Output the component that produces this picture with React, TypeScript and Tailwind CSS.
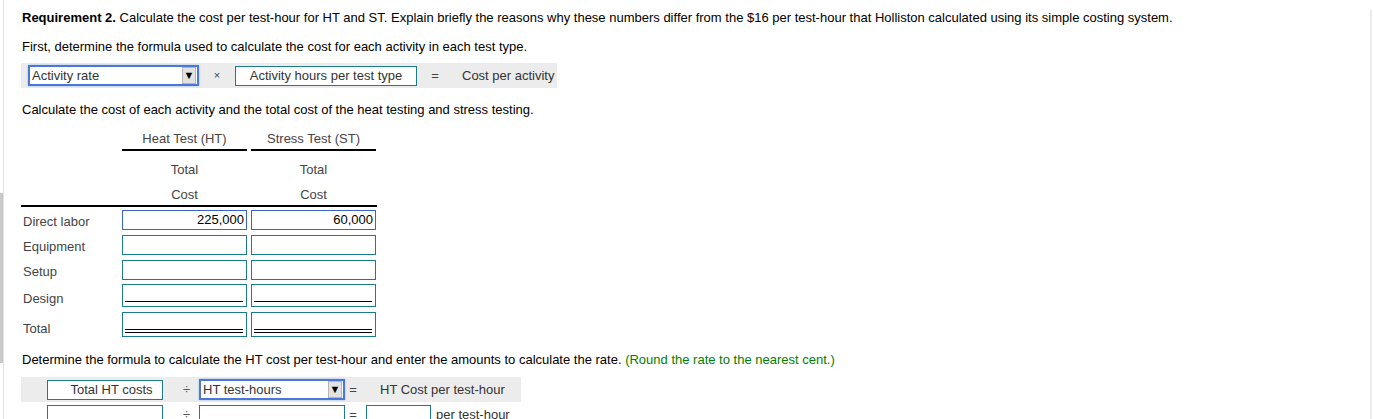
import React from 'react';

const Select: React.FC<{ label: string; width: string }> = ({ label, width }) => (
  <div
    className={`${width} h-[21px] flex items-center border-2 border-[#4a78d6] bg-white shadow-[0_0_2px_#9bb8ec]`}
  >
    <span className="flex-1 pl-[2px] text-[#333] leading-[16px] truncate">{label}</span>
    <span className="w-[14px] h-[17px] mr-px flex items-center justify-center bg-[#e2e2e2] border border-[#b5b5b5] text-[11px] leading-none text-black">
      ▼
    </span>
  </div>
);

const Box: React.FC<{ children?: React.ReactNode; className?: string }> = ({ children, className = '' }) => (
  <div className={`border border-[#1b7c8c] bg-white ${className}`}>{children}</div>
);

const rows = [
  { label: 'Direct labor', ht: '225,000', st: '60,000', h: 'h-[20px]', mt: 'mt-[3px]', line: 'none' },
  { label: 'Equipment', ht: '', st: '', h: 'h-[20px]', mt: 'mt-[5px]', line: 'none' },
  { label: 'Setup', ht: '', st: '', h: 'h-[20px]', mt: 'mt-[5px]', line: 'none' },
  { label: 'Design', ht: '', st: '', h: 'h-[23px]', mt: 'mt-[4px]', line: 'single' },
  { label: 'Total', ht: '', st: '', h: 'h-[25px]', mt: 'mt-[5px]', line: 'double' },
];

const Cell: React.FC<{ value: string; h: string; line: string; first: boolean }> = ({ value, h, line, first }) => {
  const border = first ? 'border-[#3a63d0]' : 'border-[#1b7c8c]';
  return (
    <div className={`w-[125px] ${h} border ${border} bg-white flex flex-col justify-end`}>
      {value && (
        <span className="flex-1 text-right pr-[2px] text-black leading-[18px]">{value}</span>
      )}
      {line === 'single' && <div className="mx-[2px] mr-[3px] mb-[4px] h-px bg-black" />}
      {line === 'double' && <div className="mx-[2px] mr-[3px] mb-[3px] h-[4px] border-y border-black" />}
    </div>
  );
};

export default function App() {
  return (
    <div className="flex w-[1373px] h-[419px] overflow-hidden bg-white text-[13px] font-['Liberation_Sans',Arial,sans-serif]">
      {/* left scroll track */}
      <div className="w-[3px] shrink-0">
        <div className="mt-[193px] h-[170px] bg-[#c9c9c9]" />
      </div>
      <div className="w-px shrink-0 bg-[#e2e2e2]" />

      <div className="flex-1 pl-[17px] pt-[10px]">
        <p className="pl-px leading-[16px] text-black">
          <span className="font-bold">Requirement 2.</span> Calculate the cost per test-hour for HT and ST. Explain
          briefly the reasons why these numbers differ from the $16 per test-hour that Holliston calculated using its
          simple costing system.
        </p>
        <p className="mt-[13px] pl-px leading-[16px] text-black">
          First, determine the formula used to calculate the cost for each activity in each test type.
        </p>

        <div className="mt-[8px] w-[536px] h-[25px] bg-[#ececec] flex items-center">
          <div className="ml-[7px]">
            <Select label="Activity rate" width="w-[171px]" />
          </div>
          <span className="w-[36px] text-center text-[#444] text-[11px]">×</span>
          <Box className="w-[182px] h-[20px] flex items-center justify-center">
            <span className="text-[#333] leading-[16px]">Activity hours per test type</span>
          </Box>
          <span className="w-[36px] text-center text-[#444]">=</span>
          <span className="ml-[9px] text-[#333]">Cost per activity</span>
        </div>

        <p className="mt-[14px] pl-px leading-[16px] text-black">
          Calculate the cost of each activity and the total cost of the heat testing and stress testing.
        </p>

        {/* table */}
        <div className="mt-[13px] flex text-[#444]">
          <div className="w-[101px]" />
          <div className="w-[125px] h-[20px] border-b-2 border-black text-center leading-[16px]">Heat Test (HT)</div>
          <div className="w-[125px] h-[20px] ml-[4px] border-b-2 border-black text-center leading-[16px]">
            Stress Test (ST)
          </div>
        </div>
        <div className="mt-[11px] flex text-[#444] leading-[16px]">
          <div className="w-[101px]" />
          <div className="w-[125px] text-center">Total</div>
          <div className="w-[125px] ml-[4px] text-center">Total</div>
        </div>
        <div className="mt-[9px] w-[356px] h-[20px] border-b-2 border-black flex text-[#444] leading-[16px]">
          <div className="w-[101px]" />
          <div className="w-[125px] text-center">Cost</div>
          <div className="w-[125px] ml-[4px] text-center">Cost</div>
        </div>

        {rows.map((r, i) => (
          <div key={r.label} className={`${r.mt} flex`}>
            <div
              className={`w-[101px] pl-[2px] text-[#444] leading-[16px] ${
                r.line === 'none' ? 'self-center pt-[4px]' : 'self-end'
              }`}
            >
              {r.label}
            </div>
            <Cell value={r.ht} h={r.h} line={r.line} first={i === 0} />
            <div className="ml-[4px]">
              <Cell value={r.st} h={r.h} line={r.line} first={i === 0} />
            </div>
          </div>
        ))}

        <p className="mt-[15px] pl-px leading-[16px] text-black">
          Determine the formula to calculate the HT cost per test-hour and enter the amounts to calculate the rate.{' '}
          <span className="text-[#008000]">(Round the rate to the nearest cent.)</span>
        </p>

        <div className="mt-[9px] w-[500px] h-[25px] bg-[#ececec] flex items-center">
          <Box className="ml-[26px] w-[116px] h-[20px] flex items-center justify-center pl-[13px]">
            <span className="text-[#333] leading-[16px] whitespace-nowrap">Total HT costs</span>
          </Box>
          <span className="w-[36px] pl-[20px] text-[#555]">÷</span>
          <Select label="HT test-hours" width="w-[146px]" />
          <span className="w-[16px] text-center text-[#444]">=</span>
          <span className="ml-[19px] text-[#333]">HT Cost per test-hour</span>
        </div>
        <div className="mt-[3px] flex items-center">
          <Box className="ml-[26px] w-[116px] h-[20px]" />
          <span className="w-[36px] pl-[20px] text-[#555]">÷</span>
          <Box className="w-[146px] h-[20px]" />
          <span className="w-[16px] text-center text-[#444]">=</span>
          <Box className="ml-[5px] w-[65px] h-[20px]" />
          <span className="ml-[5px] text-[#333]">per test-hour</span>
        </div>
      </div>

      {/* right scroll track */}
      <div className="w-[2px] shrink-0 mt-[10px] bg-[#ececec]" />
      <div className="w-px shrink-0" />
    </div>
  );
}
